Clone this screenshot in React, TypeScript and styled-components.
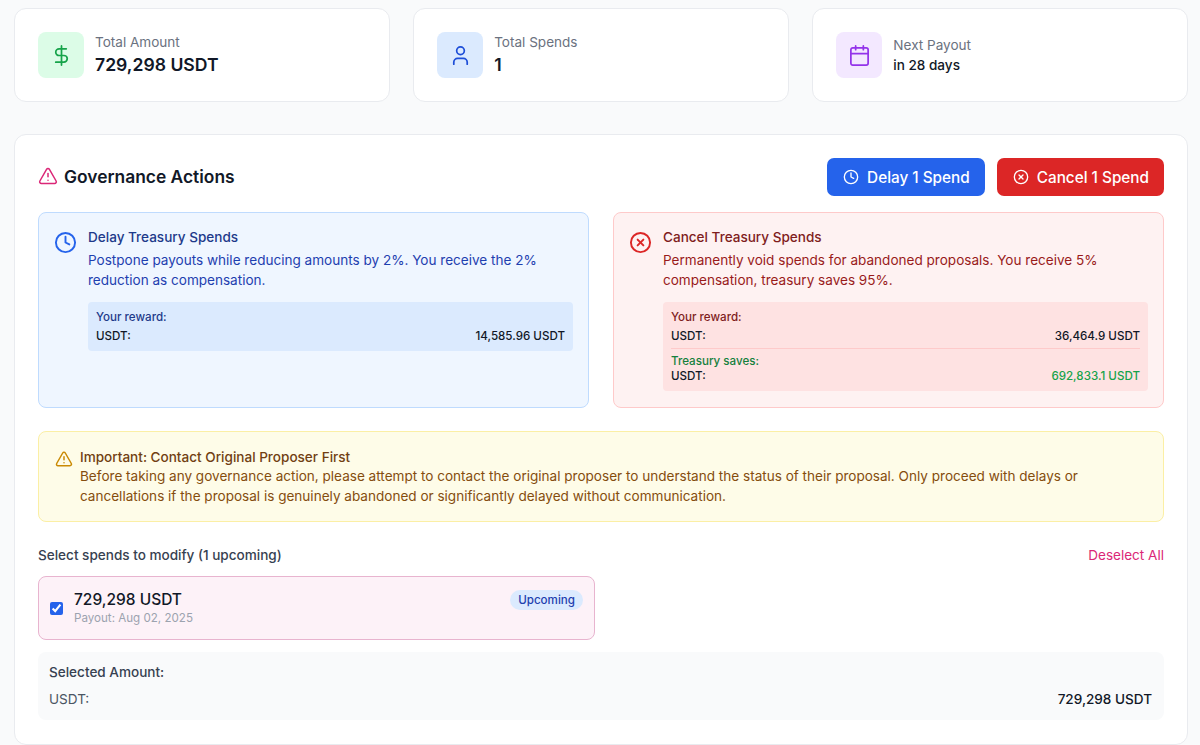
import React from 'react';
import styled, { createGlobalStyle } from 'styled-components';
import { Calendar, CircleX, Clock, DollarSign, TriangleAlert, User } from 'lucide-react';

const GlobalStyle = createGlobalStyle`
  * {
    margin: 0;
    padding: 0;
    box-sizing: border-box;
  }
  body {
    font-family: 'Inter', 'Liberation Sans', sans-serif;
    background-color: #f9fafb;
    color: #111827;
    overflow: hidden;
  }
`;

const stats = [
  { label: 'Total Amount', value: '729,298 USDT', tone: 'green', small: false, Icon: DollarSign },
  { label: 'Total Spends', value: '1', tone: 'blue', small: false, Icon: User },
  { label: 'Next Payout', value: 'in 28 days', tone: 'purple', small: true, Icon: Calendar },
] as const;

const App = () => {
  return (
    <>
      <GlobalStyle />
      <Page>
        <StatsRow>
          {stats.map(({ label, value, tone, small, Icon }) => (
            <StatCard key={label}>
              <StatIcon $tone={tone}>
                <Icon size={23} strokeWidth={1.8} />
              </StatIcon>
              <div>
                <StatLabel>{label}</StatLabel>
                <StatValue $small={small}>{value}</StatValue>
              </div>
            </StatCard>
          ))}
        </StatsRow>

        <Panel>
          <PanelHeader>
            <PanelTitle>
              <TriangleAlert size={20} color="#db2777" strokeWidth={1.8} />
              Governance Actions
            </PanelTitle>
            <ButtonRow>
              <ActionButton $tone="blue">
                <Clock size={16} strokeWidth={2} />
                Delay 1 Spend
              </ActionButton>
              <ActionButton $tone="red">
                <CircleX size={16} strokeWidth={2} />
                Cancel 1 Spend
              </ActionButton>
            </ButtonRow>
          </PanelHeader>

          <InfoGrid>
            <InfoBox $tone="blue">
              <Clock size={23} color="#2563eb" strokeWidth={2} />
              <InfoBody>
                <InfoTitle $tone="blue">Delay Treasury Spends</InfoTitle>
                <InfoText $tone="blue">
                  Postpone payouts while reducing amounts by 2%. You receive the 2% reduction as compensation.
                </InfoText>
                <RewardBox $tone="blue">
                  <RewardLabel $color="#1e3a8a">Your reward:</RewardLabel>
                  <RewardRow>
                    <span>USDT:</span>
                    <span>14,585.96 USDT</span>
                  </RewardRow>
                </RewardBox>
              </InfoBody>
            </InfoBox>

            <InfoBox $tone="red">
              <CircleX size={23} color="#dc2626" strokeWidth={2} />
              <InfoBody>
                <InfoTitle $tone="red">Cancel Treasury Spends</InfoTitle>
                <InfoText $tone="red">
                  Permanently void spends for abandoned proposals. You receive 5% compensation, treasury saves 95%.
                </InfoText>
                <RewardBox $tone="red">
                  <RewardLabel $color="#7f1d1d">Your reward:</RewardLabel>
                  <RewardRow>
                    <span>USDT:</span>
                    <span>36,464.9 USDT</span>
                  </RewardRow>
                  <RewardDivider />
                  <RewardLabel $color="#15803d">Treasury saves:</RewardLabel>
                  <RewardRow $tight>
                    <span>USDT:</span>
                    <SavedAmount>692,833.1 USDT</SavedAmount>
                  </RewardRow>
                </RewardBox>
              </InfoBody>
            </InfoBox>
          </InfoGrid>

          <WarningBox>
            <WarningIcon>
              <TriangleAlert size={18} color="#ca8a04" strokeWidth={2} />
            </WarningIcon>
            <div>
              <WarningTitle>Important: Contact Original Proposer First</WarningTitle>
              <WarningText>
                Before taking any governance action, please attempt to contact the original proposer to understand the
                status of their proposal. Only proceed with delays or cancellations if the proposal is genuinely
                abandoned or significantly delayed without communication.
              </WarningText>
            </div>
          </WarningBox>

          <SelectHeader>
            <SelectTitle>Select spends to modify (1 upcoming)</SelectTitle>
            <DeselectLink>Deselect All</DeselectLink>
          </SelectHeader>

          <SpendGrid>
            <SpendCard>
              <SpendCheck type="checkbox" defaultChecked />
              <SpendInfo>
                <SpendAmount>729,298 USDT</SpendAmount>
                <SpendDate>Payout: Aug 02, 2025</SpendDate>
              </SpendInfo>
              <Badge>Upcoming</Badge>
            </SpendCard>
          </SpendGrid>

          <SelectedBox>
            <SelectedTitle>Selected Amount:</SelectedTitle>
            <SelectedRow>
              <SelectedToken>USDT:</SelectedToken>
              <SelectedValue>729,298 USDT</SelectedValue>
            </SelectedRow>
          </SelectedBox>
        </Panel>
      </Page>
    </>
  );
};

export default App;

type Tone = 'blue' | 'red';

const statTones = {
  green: { bg: '#dcfce7', fg: '#16a34a' },
  blue: { bg: '#dbeafe', fg: '#1d4ed8' },
  purple: { bg: '#f3e8ff', fg: '#9333ea' },
};

const infoTones = {
  blue: { bg: '#eff6ff', border: '#bfdbfe', title: '#1e3a8a', text: '#1e40af', inner: '#dbeafe' },
  red: { bg: '#fef2f2', border: '#fecaca', title: '#7f1d1d', text: '#991b1b', inner: '#fee2e2' },
};

const Page = styled.div`
  padding: 8px 12px 0 14px;
  height: 745px;
`;

const StatsRow = styled.div`
  display: grid;
  grid-template-columns: repeat(3, 1fr);
  gap: 23.5px;
  margin-bottom: 32px;
`;

const StatCard = styled.div`
  display: flex;
  align-items: center;
  gap: 11px;
  height: 94px;
  padding: 0 23px;
  background: #fff;
  border: 1px solid #e9ebef;
  border-radius: 12px;
`;

const StatIcon = styled.div<{ $tone: keyof typeof statTones }>`
  display: flex;
  align-items: center;
  justify-content: center;
  width: 46px;
  height: 46px;
  border-radius: 8px;
  background: ${(p) => statTones[p.$tone].bg};
  color: ${(p) => statTones[p.$tone].fg};
`;

const StatLabel = styled.div`
  font-size: 13.55px;
  line-height: 20px;
  color: #6b7280;
`;

const StatValue = styled.div<{ $small: boolean }>`
  font-size: ${(p) => (p.$small ? '13.55px' : '17.6px')};
  line-height: ${(p) => (p.$small ? '20px' : '26px')};
  font-weight: ${(p) => (p.$small ? 500 : 600)};
  color: #111827;
`;

const Panel = styled.div`
  height: 611px;
  padding: 23px;
  background: #fff;
  border: 1px solid #e9ebef;
  border-radius: 12px;
`;

const PanelHeader = styled.div`
  display: flex;
  align-items: center;
  justify-content: space-between;
  height: 38px;
  margin-bottom: 16px;
`;

const PanelTitle = styled.h2`
  display: flex;
  align-items: center;
  gap: 6px;
  padding-bottom: 2px;
  font-size: 17.4px;
  font-weight: 600;
  color: #111827;
`;

const ButtonRow = styled.div`
  display: flex;
  gap: 12px;
`;

const ActionButton = styled.button<{ $tone: Tone }>`
  display: flex;
  align-items: center;
  gap: 8px;
  height: 38px;
  padding: 0 15px 0 16px;
  border: none;
  border-radius: 7px;
  font-family: inherit;
  font-size: 15.3px;
  font-weight: 500;
  color: #fff;
  background: ${(p) => (p.$tone === 'blue' ? '#2563eb' : '#dc2626')};
  cursor: pointer;
`;

const InfoGrid = styled.div`
  display: grid;
  grid-template-columns: 1fr 1fr;
  gap: 24px;
  margin-bottom: 23px;
`;

const InfoBox = styled.div<{ $tone: Tone }>`
  display: flex;
  align-items: flex-start;
  gap: 11px;
  height: 196px;
  padding: 14px 15px;
  background: ${(p) => infoTones[p.$tone].bg};
  border: 1px solid ${(p) => infoTones[p.$tone].border};
  border-radius: 8px;

  > svg {
    flex-shrink: 0;
    margin-top: 4px;
  }
`;

const InfoBody = styled.div`
  flex: 1;
`;

const InfoTitle = styled.h3<{ $tone: Tone }>`
  font-size: 13.55px;
  line-height: 20px;
  font-weight: 500;
  color: ${(p) => infoTones[p.$tone].title};
`;

const InfoText = styled.p<{ $tone: Tone }>`
  margin-top: 4px;
  font-size: 13.55px;
  line-height: 19.5px;
  color: ${(p) => infoTones[p.$tone].text};
`;

const RewardBox = styled.div<{ $tone: Tone }>`
  margin-top: 12px;
  padding: 6px 8px 5px;
  border-radius: 4px;
  background: ${(p) => infoTones[p.$tone].inner};
`;

const RewardLabel = styled.div<{ $color: string }>`
  font-size: 11.6px;
  line-height: 18px;
  font-weight: 500;
  color: ${(p) => p.$color};
`;

const RewardRow = styled.div<{ $tight?: boolean }>`
  display: flex;
  justify-content: space-between;
  font-size: 11.6px;
  line-height: ${(p) => (p.$tight ? '13px' : '20px')};
  margin-bottom: ${(p) => (p.$tight ? '3px' : '0')};
  font-weight: 500;
  color: #111827;
`;

const RewardDivider = styled.div`
  height: 1px;
  margin: 2px 0 3px;
  background: #fecaca;
`;

const SavedAmount = styled.span`
  color: #16a34a;
`;

const WarningBox = styled.div`
  display: flex;
  align-items: flex-start;
  gap: 7px;
  height: 91px;
  padding: 16px 16px 0;
  background: #fefce8;
  border: 1px solid #fbefa5;
  border-radius: 8px;
  margin-bottom: 23px;
`;

const WarningIcon = styled.div`
  flex-shrink: 0;
  margin-top: 2px;
`;

const WarningTitle = styled.h4`
  font-size: 13.55px;
  line-height: 19px;
  font-weight: 500;
  color: #713f12;
`;

const WarningText = styled.p`
  font-size: 13.55px;
  line-height: 19.5px;
  color: #854d0e;
`;

const SelectHeader = styled.div`
  display: flex;
  align-items: center;
  justify-content: space-between;
  height: 20px;
  margin-bottom: 11px;
`;

const SelectTitle = styled.span`
  font-size: 13.55px;
  font-weight: 500;
  color: #374151;
`;

const DeselectLink = styled.button`
  border: none;
  background: none;
  font-family: inherit;
  font-size: 13.55px;
  color: #db2777;
  cursor: pointer;
`;

const SpendGrid = styled.div`
  display: grid;
  grid-template-columns: 1fr 1fr;
  gap: 12px;
  margin-bottom: 12px;
`;

const SpendCard = styled.label`
  display: flex;
  align-items: center;
  height: 64px;
  padding: 0 11px;
  background: #fdf2f8;
  border: 1px solid #e8b4cf;
  border-radius: 8px;
`;

const SpendCheck = styled.input`
  width: 13px;
  height: 13px;
  margin: 0 11px 0 0;
  accent-color: #2563eb;
`;

const SpendInfo = styled.div`
  flex: 1;
`;

const SpendAmount = styled.div`
  font-size: 15.5px;
  line-height: 20px;
  font-weight: 500;
  color: #111827;
`;

const SpendDate = styled.div`
  font-size: 11.6px;
  line-height: 16px;
  color: #9ca3af;
`;

const Badge = styled.span`
  align-self: flex-start;
  margin-top: 13px;
  padding: 0 8px;
  border-radius: 999px;
  background: #dbeafe;
  font-size: 11.6px;
  line-height: 20px;
  font-weight: 500;
  color: #1e40af;
`;

const SelectedBox = styled.div`
  height: 68px;
  padding: 10px 12px 10px 11px;
  border-radius: 8px;
  background: #f9fafb;
`;

const SelectedTitle = styled.div`
  font-size: 13.55px;
  line-height: 20px;
  font-weight: 500;
  color: #374151;
`;

const SelectedRow = styled.div`
  display: flex;
  justify-content: space-between;
  margin-top: 7px;
  font-size: 13.55px;
  line-height: 20px;
`;

const SelectedToken = styled.span`
  color: #4b5563;
`;

const SelectedValue = styled.span`
  font-weight: 500;
  color: #111827;
`;
